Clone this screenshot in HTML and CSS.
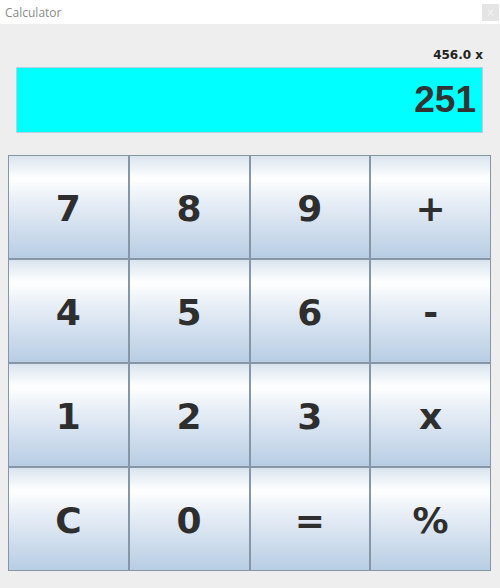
FILE: index.html
```html
<!DOCTYPE html>
<html>
<head>
<meta charset="utf-8">
<link rel="stylesheet" href="styles.css">
</head>
<body>
<div class="titlebar">
  <span class="title">Calculator</span>
  <span class="close">×</span>
</div>
<div class="content">
  <div class="status">456.0 x</div>
  <div class="display">251</div>
  <div class="keys">
    <button class="key">7</button>
    <button class="key">8</button>
    <button class="key">9</button>
    <button class="key">+</button>
    <button class="key">4</button>
    <button class="key">5</button>
    <button class="key">6</button>
    <button class="key">-</button>
    <button class="key">1</button>
    <button class="key">2</button>
    <button class="key">3</button>
    <button class="key">x</button>
    <button class="key">C</button>
    <button class="key">0</button>
    <button class="key">=</button>
    <button class="key">%</button>
  </div>
</div>
</body>
</html>
```
FILE: styles.css
```css
html, body {
  margin: 0;
  padding: 0;
  background: #eeeeee;
  width: 500px;
  height: 588px;
  overflow: hidden;
}
.titlebar {
  height: 24px;
  background: #ffffff;
  display: flex;
  align-items: center;
  justify-content: space-between;
  padding: 0 1px 0 5px;
  box-sizing: border-box;
}
.title {
  font-family: "Open Sans", sans-serif;
  font-size: 12px;
  color: #8a8a8a;
}
.close {
  width: 17px;
  height: 17px;
  background: #e4e4e4;
  color: #f4f4f4;
  font-family: "DejaVu Sans", sans-serif;
  font-size: 10px;
  display: flex;
  align-items: center;
  justify-content: center;
}
.content {
  padding: 0 9px 0 8px;
}
.status {
  margin-top: 24px;
  height: 14px;
  line-height: 14px;
  padding-right: 8px;
  text-align: right;
  font-family: "DejaVu Sans", sans-serif;
  font-weight: bold;
  font-size: 12px;
  color: #222222;
}
.display {
  margin: 5px 8px 0 8px;
  height: 66px;
  box-sizing: border-box;
  border: 1px solid #b9cde2;
  background: #00ffff;
  display: flex;
  align-items: center;
  justify-content: flex-end;
  padding-right: 6px;
  font-family: "Liberation Sans", Arial, sans-serif;
  font-weight: bold;
  font-size: 37px;
  color: #333333;
}
.keys {
  margin-top: 22px;
  display: grid;
  grid-template-columns: repeat(4, 1fr);
  grid-template-rows: repeat(4, 104px);
}
.key {
  margin: 0;
  padding: 2px 0 0 0;
  border: 1px solid #8796a6;
  background: linear-gradient(to bottom, #dae4ef 0%, #ffffff 22%, #e7eef6 45%, #cddcec 75%, #b8cde3 100%);
  font-family: "DejaVu Sans", sans-serif;
  font-weight: bold;
  font-size: 36px;
  color: #2e2e2e;
  display: flex;
  align-items: center;
  justify-content: center;
}
```
